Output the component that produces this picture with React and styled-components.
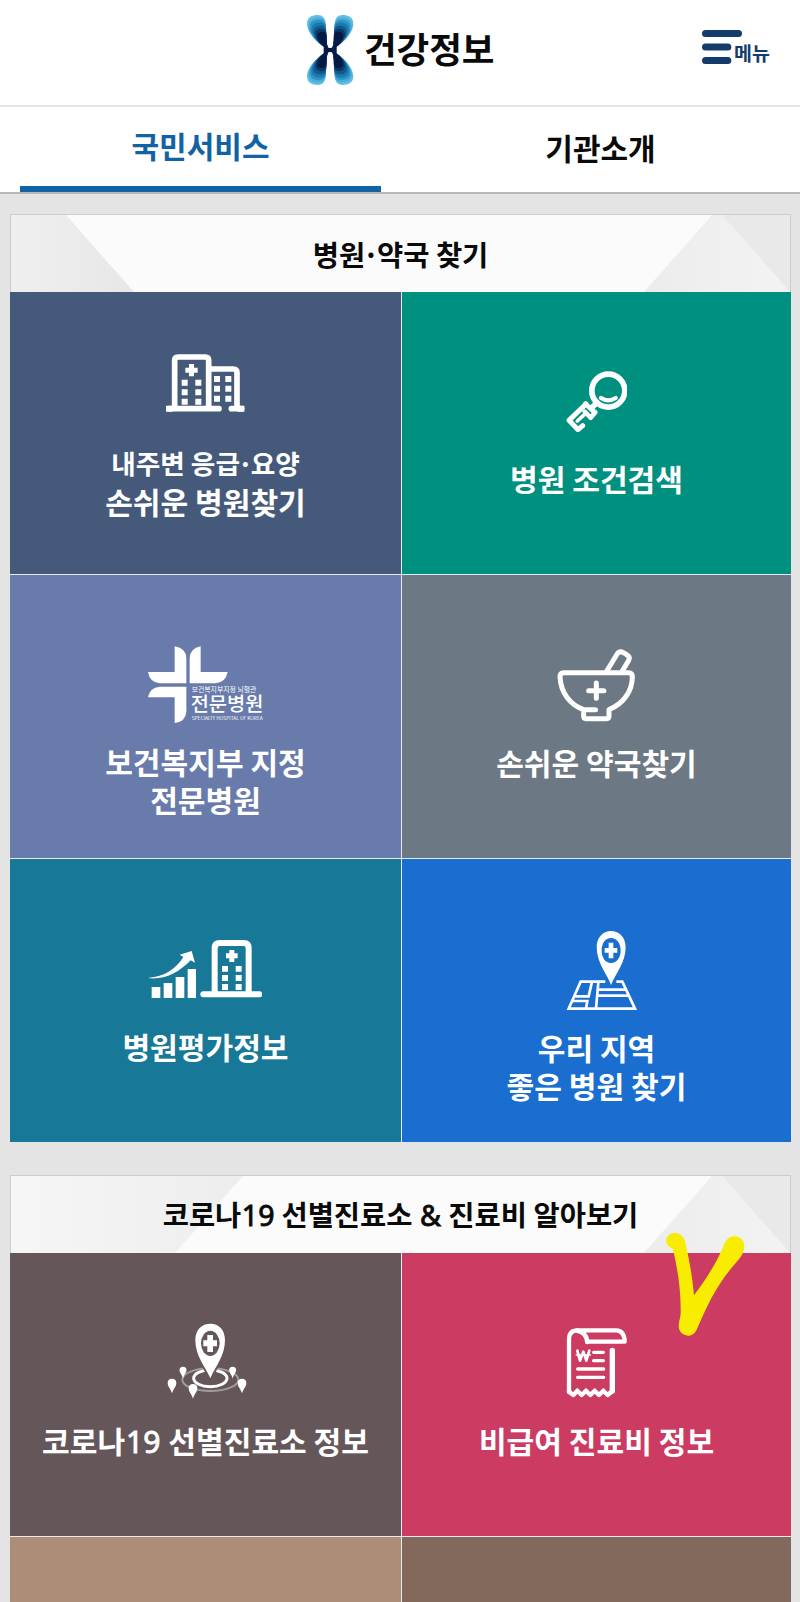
import React from 'react';
import styled, { createGlobalStyle } from 'styled-components';

const GlobalStyle = createGlobalStyle`
  * {
    box-sizing: border-box;
  }
  body {
    margin: 0;
    background: #e4e4e4;
    font-family: 'Noto Sans CJK KR', 'Noto Sans', sans-serif;
  }
`;

const Page = styled.div`
  width: 800px;
  height: 1602px;
  overflow: hidden;
  background: #e4e4e4;
`;

const Header = styled.header`
  display: grid;
  grid-template-columns: 1fr auto 1fr;
  align-items: center;
  height: 107px;
  padding: 0 30px;
  background: #fff;
  border-bottom: 2px solid #e1e8e8;
`;

const Logo = styled.a`
  grid-column: 2;
  display: flex;
  align-items: center;
  gap: 10px;
  padding: 0 0 6px 2px;
  color: #0a0a0a;
  font-size: 35.5px;
  font-weight: 700;
  line-height: 48px;

  span {
    margin-bottom: 4px;
  }
`;

const LogoMark = styled.svg`
  display: block;
  width: 46.4px;
  height: 70px;
`;

const MenuButton = styled.button`
  justify-self: end;
  display: flex;
  align-items: center;
  padding: 0 0 12px;
  border: 0;
  background: none;
  color: #143c6b;
  font: inherit;
  font-size: 19.5px;
  font-weight: 700;
  line-height: 24px;

  svg {
    display: block;
    width: 40px;
    height: 34px;
  }

  span {
    margin: 12px 0 0 -8px;
  }
`;

const Tabs = styled.nav`
  display: grid;
  grid-template-columns: 1fr 1fr;
  height: 87px;
  background: #fff;
  border-bottom: 2px solid #b4b8ba;
`;

const Tab = styled.a`
  display: flex;
  align-items: center;
  justify-content: center;
  margin: 0 19px 0 20px;
  padding-bottom: ${(props) => (props.$active ? 4 : 3)}px;
  border-bottom: ${(props) => (props.$active ? '6px solid #1263a3' : '2px solid transparent')};
  color: ${(props) => (props.$active ? '#1263a3' : '#0a0a0a')};
  font-size: 30px;
  font-weight: 700;
  line-height: 44px;
`;

const Section = styled.section`
  position: relative;
  width: 781px;
  margin: ${(props) => props.$top}px 0 0 10px;
`;

const SectionTitle = styled.h2`
  position: relative;
  display: flex;
  align-items: center;
  justify-content: center;
  height: 78px;
  margin: 0;
  background: #fbfbfb;
  border: 1px solid #cdcdcd;
  border-bottom: 0;
  color: #0a0a0a;
  font-size: 28.5px;
  font-weight: 700;
  line-height: 40px;
`;

const TitleText = styled.span`
  position: relative;
  white-space: nowrap;
`;

const TitleShapes = styled.svg`
  position: absolute;
  inset: 0;
  width: 100%;
  height: 100%;
`;

const Latin = styled.span`
  padding: 0 ${(props) => props.$pad || 0}px;
  font-family: 'Noto Sans', sans-serif;
  font-weight: 400;
  -webkit-text-stroke: 0.9px currentColor;
`;

const Dot = styled.span`
  margin: 0 -2.5px;
`;

const TileGrid = styled.div`
  display: grid;
  grid-template-columns: 391px 389px;
  grid-template-rows: ${(props) => props.$firstRow}px;
  grid-auto-rows: 283px;
  gap: 1px;
  background: #e6ebef;
`;

const Tile = styled.a`
  display: flex;
  flex-direction: column;
  align-items: center;
  padding-top: ${(props) => props.$top}px;
  background: ${(props) => props.$color};
  color: #fff;
`;

const TileIcon = styled.svg`
  display: block;
  flex: none;
  width: ${(props) => props.$w / 3}px;
  height: ${(props) => props.$h / 3}px;
  margin-bottom: ${(props) => props.$gap}px;
  font-family: 'Noto Sans CJK KR', sans-serif;
`;

const Label = styled.span`
  font-size: ${(props) => (props.$small ? 26.7 : 30.1)}px;
  font-weight: 700;
  line-height: 38px;
  white-space: nowrap;
`;

const Marker = styled.svg`
  position: absolute;
  left: 655.5px;
  top: 57.5px;
  width: 79px;
  height: 103px;
`;

const wing = 'M116 147 C96 140 50 104 50 70 C50 50 66 44 82 44 C98 44 106 54 106 74 C106 104 106 128 116 147 Z';
const wingLayers = [
  ['#62bfe3', 1],
  ['#4aaed8', 0.93],
  ['#2f93c6', 0.86],
  ['#1c79ad', 0.78],
  ['#125a8b', 0.69],
  ['#0b3a69', 0.6],
  ['#061a44', 0.51],
];

const Wing = ({ flip }) => (
  <g transform={flip}>
    {wingLayers.map(([fill, s]) => (
      <path
        key={fill}
        d={wing}
        fill={fill}
        transform={`translate(${112 - 112 * s} ${147 - 147 * s}) scale(${s})`}
      />
    ))}
  </g>
);

const BuildingsIcon = ({ gap }) => (
  <TileIcon $w={235} $h={174} $gap={gap} viewBox="228 43 235 174">
    <g fill="none" stroke="#fff" strokeWidth="17">
      <path d="M254 205 V62 Q254 52 264 52 H346 Q356 52 356 62 V205" />
      <path d="M358 88 H430 Q441 88 441 99 V205" />
      <path d="M236 207 H387" strokeLinecap="round" />
      <path d="M424 207 H455" strokeLinecap="round" />
    </g>
    <g fill="#fff">
      <path d="M228 198h20v18h-20zM443 198h20v18h-20z" />
      <path d="M297 73h15v11h11v15h-11v11h-15v-11h-11v-15h11z" />
      <path d="M275 120h18v18h-18zM316 120h18v18h-18zM275 149h18v18h-18zM316 149h18v18h-18zM275 177h18v18h-18zM316 177h18v18h-18z" />
      <path d="M372 109h18v18h-18zM406 109h18v18h-18zM372 138h18v18h-18zM406 138h18v18h-18zM372 168h18v18h-18zM406 168h18v18h-18z" />
    </g>
  </TileIcon>
);

const KeyIcon = ({ gap }) => (
  <TileIcon $w={185} $h={184} $gap={gap} viewBox="228 62 185 184">
    <g fill="none" stroke="#fff" strokeLinecap="round" strokeLinejoin="round">
      <circle cx="355" cy="121" r="49.5" strokeWidth="17" />
      <path d="M333 143 Q355 157 377 143" strokeWidth="13" />
      <path d="M320 157 L306 172" strokeWidth="17" />
      <path d="M316 186 L302 202 L284 184" strokeWidth="14" />
      <path d="M288 161 L237 210 L264 238 L278 226" strokeWidth="15" />
      <path d="M286 160 L312 184" strokeWidth="14" />
      <path d="M262 212 L286 190" strokeWidth="11" />
    </g>
  </TileIcon>
);

const SpecialtyIcon = ({ gap }) => (
  <TileIcon $w={345} $h={231} $gap={gap} viewBox="173 47 345 231">
    <g fill="#fff">
      <path d="M253 48 Q288 54 288 84 V159 H208 Q178 156 173 125 H253 Z" />
      <path d="M331 48 V125 H412 Q406 156 376 159 H298 V84 Q299 54 331 48 Z" />
      <path d="M288 169 V244 Q286 274 253 278 V201 H173 Q178 172 208 169 Z" />
      <text x="304" y="185" fontSize="19" textLength="194" lengthAdjust="spacingAndGlyphs">보건복지부지정 뇌혈관</text>
      <text x="301" y="243" fontSize="58" fontWeight="500" textLength="218" lengthAdjust="spacingAndGlyphs">전문병원</text>
      <text x="304" y="269" fontSize="13" textLength="213" lengthAdjust="spacingAndGlyphs">SPECIALTY HOSPITAL OF KOREA</text>
    </g>
  </TileIcon>
);

const MortarIcon = ({ gap }) => (
  <TileIcon $w={235} $h={218} $gap={gap} viewBox="232 58 235 218">
    <g fill="none" stroke="#fff" strokeWidth="15" strokeLinecap="round" strokeLinejoin="round">
      <path d="M348 240 H312 V260 Q312 267 319 267 H380 Q388 267 388 260 V240 C432 222 458 184 458 141 Q458 129 447 129 H252 Q241 129 241 141 C243 190 272 226 312 240" />
      <path d="M381 125 L411 75 Q419 62 431 69 L441 75 Q453 82 446 94 L428 124" />
      <path d="M350 160 V206 M327 183 H373" />
    </g>
  </TileIcon>
);

const ChartIcon = ({ gap }) => (
  <TileIcon $w={340} $h={174} $gap={gap} viewBox="146 60 340 174">
    <g fill="#fff">
      <path d="M154 201h26v33h-26zM190 189h26v45h-26zM226 171h26v63h-26zM262 147h25v87h-25z" />
      <path d="M146 173 C190 171 228 146 249 111 L238 104 L274 93 L284 128 L271 121 C236 158 194 179 146 175 Z" />
      <path d="M387 90h15v10h10v15h-10v11h-15v-11h-10v-15h10z" />
      <path d="M365 138h18v17h-18zM406 138h18v17h-18zM365 165h18v18h-18zM406 165h18v18h-18zM365 192h18v18h-18zM406 192h18v18h-18z" />
    </g>
    <g fill="none" stroke="#fff" strokeWidth="18">
      <path d="M343 218 V85 Q343 69 358 69 H430 Q445 69 445 85 V218" />
      <path d="M309 223 H477" strokeLinecap="round" />
    </g>
  </TileIcon>
);

const MapIcon = ({ gap }) => (
  <TileIcon $w={243} $h={238} $gap={gap} viewBox="198 32 243 238">
    <path
      fillRule="evenodd"
      fill="#fff"
      d="M363 194 C352 162 320 128 320 80 C320 52 339 32 363 32 C388 32 407 52 407 80 C407 128 375 162 363 194 Z M363 53 C346 53 335 69 335 90 C335 113 346 128 363 128 C380 128 392 113 392 90 C392 69 380 53 363 53 Z"
    />
    <path fill="#fff" d="M356 67h14v16h12v14h-12v17h-14v-17h-12v-14h12z" />
    <g fill="none" stroke="#fff" strokeWidth="8">
      <path d="M346 184 H272 L236 265 H435 L397 184 H379" />
      <path d="M306 184 L296 228 H252 M325 186 L318 265 M320 208 H408 M318 226 H417 M246 242 H292 L288 265" />
    </g>
  </TileIcon>
);

const smallPin = 'M0 44 C-4 30 -13 24 -13 12 C-13 4 -7 0 0 0 C7 0 13 4 13 12 C13 24 4 30 0 44 Z';

const ScreeningIcon = ({ gap }) => (
  <TileIcon $w={247} $h={228} $gap={gap} viewBox="493 490 247 228">
    <ellipse cx="632" cy="660" rx="84" ry="34" fill="none" stroke="#a39a9b" strokeWidth="6" />
    <ellipse cx="632" cy="656" rx="50" ry="25" fill="#655759" stroke="#fff" strokeWidth="9" />
    <path
      fill="#fff"
      stroke="#655759"
      strokeWidth="12"
      paintOrder="stroke"
      d="M632 656 C618 622 587 590 587 541 C587 510 607 492 632 492 C657 492 676 510 676 541 C676 590 646 622 632 656 Z"
    />
    <ellipse cx="632" cy="551" rx="28" ry="38" fill="#655759" />
    <path fill="#fff" d="M623 526h17v16h12v18h-12v17h-17v-17h-12v-18h12z" />
    <g fill="#fff">
      <path d={smallPin} transform="translate(517 657)" />
      <path d={smallPin} transform="translate(580 673)" />
      <path d={smallPin} transform="translate(727 657)" />
      <path d={smallPin} transform="translate(550 621) scale(.8)" />
      <path d={smallPin} transform="translate(699 621) scale(.8)" />
    </g>
  </TileIcon>
);

const ReceiptIcon = ({ gap }) => (
  <TileIcon $w={183} $h={210} $gap={gap} viewBox="499 503 183 210">
    <g fill="none" stroke="#fff" strokeLinecap="round" strokeLinejoin="round">
      <path d="M508 695 V538 Q508 510 533 510 H650 Q674 511 675 544 H563" strokeWidth="13" />
      <path d="M533 511 Q559 514 563 545" strokeWidth="14" />
      <path d="M638 570 V692" strokeWidth="16" />
      <path d="M508 694 L521 704 L533 691 L546 704 L559 691 L572 704 L585 691 L598 704 L611 691 L624 704 L638 692" strokeWidth="13" />
      <path d="M582 576 H611 M582 601 H611 M534 626 H612 M534 651 H612" strokeWidth="10" />
      <path d="M533 571 L541 601 L551 574 L560 601 L569 571" strokeWidth="8" />
      <path d="M530 584 H572" strokeWidth="5" />
    </g>
  </TileIcon>
);

const hospitalTiles = [
  {
    color: '#455a7b',
    top: 62.3,
    gap: 31.5,
    icon: BuildingsIcon,
    lines: [<>내주변 응급<Dot>·</Dot>요양</>, '손쉬운 병원찾기'],
    smallFirst: true,
  },
  { color: '#00907f', top: 78.7, gap: 27, icon: KeyIcon, lines: ['병원 조건검색'] },
  { color: '#687bab', top: 70.7, gap: 19.3, icon: SpecialtyIcon, lines: ['보건복지부 지정', '전문병원'] },
  { color: '#6c7883', top: 74.3, gap: 21, icon: MortarIcon, lines: ['손쉬운 약국찾기'] },
  { color: '#177898', top: 81, gap: 29, icon: ChartIcon, lines: ['병원평가정보'] },
  { color: '#196ed0', top: 71.7, gap: 17.5, icon: MapIcon, lines: ['우리 지역', '좋은 병원 찾기'] },
];

const costTiles = [
  {
    color: '#655759',
    top: 70.3,
    gap: 21.7,
    icon: ScreeningIcon,
    lines: [<>코로나<Latin $pad={1}>19</Latin> 선별진료소 정보</>],
  },
  { color: '#cb3b62', top: 74.7, gap: 23.3, icon: ReceiptIcon, lines: ['비급여 진료비 정보'] },
  { color: '#ad8c78', top: 70, lines: [] },
  { color: '#82695b', top: 70, lines: [] },
];

const TileList = ({ tiles, firstRow }) => (
  <TileGrid $firstRow={firstRow}>
    {tiles.map(({ color, top, gap, icon: Icon, lines, smallFirst }) => (
      <Tile key={color} $color={color} $top={top}>
        {Icon && <Icon gap={gap} />}
        {lines.map((line, i) => (
          <Label key={i} $small={smallFirst && i === 0}>{line}</Label>
        ))}
      </Tile>
    ))}
  </TileGrid>
);

const Title = ({ left, id, colors, children }) => (
  <SectionTitle>
    <TitleShapes viewBox="0 0 779 77" preserveAspectRatio="none">
      <defs>
        <linearGradient id={id}>
          <stop offset="0" stopColor={colors[0]} />
          <stop offset="1" stopColor={colors[1]} />
        </linearGradient>
        <linearGradient id={`${id}-peak`}>
          <stop offset="0" stopColor="#ececec" />
          <stop offset="1" stopColor="#f3f3f3" />
        </linearGradient>
      </defs>
      <path d={left} fill={`url(#${id})`} />
      <path d="M633 77 L701 0 H711 L779 77 Z" fill={`url(#${id}-peak)`} />
      <path d="M711 0 H779 V77 Z" fill="#e9e9e9" />
    </TitleShapes>
    <TitleText>{children}</TitleText>
  </SectionTitle>
);

const App = () => (
  <Page>
    <GlobalStyle />
    <Header>
      <Logo>
        <LogoMark viewBox="50 44 139 210">
          <Wing />
          <Wing flip="translate(239 0) scale(-1 1)" />
          <Wing flip="translate(0 298) scale(1 -1)" />
          <Wing flip="translate(239 298) scale(-1 -1)" />
          <path d="M100 138 Q119 148 139 138 V160 Q119 150 100 160 Z" fill="#061a44" />
        </LogoMark>
        <span>건강정보</span>
      </Logo>
      <MenuButton>
        <svg viewBox="0 0 120 102">
          <g stroke="#143c6b" strokeWidth="21" strokeLinecap="round">
            <path d="M10.5 10.5 H109.5 M10.5 51 H77.5 M10.5 91.5 H77.5" />
          </g>
        </svg>
        <span>메뉴</span>
      </MenuButton>
    </Header>
    <Tabs>
      <Tab $active>국민서비스</Tab>
      <Tab>기관소개</Tab>
    </Tabs>

    <Section $top={20}>
      <Title id="hospital" left="M0 0 H55 L123 77 H0 Z" colors={['#efefef', '#e7e7e7']}>
        병원<Dot>·</Dot>약국 찾기
      </Title>
      <TileList tiles={hospitalTiles} firstRow={282} />
    </Section>

    <Section $top={33}>
      <Title id="cost" left="M0 0 H232 L164 77 H0 Z" colors={['#f6f6f6', '#ededed']}>
        코로나<Latin $pad={0.5}>19</Latin> 선별진료소 <Latin $pad={1}>&amp;</Latin> 진료비 알아보기
      </Title>
      <TileList tiles={costTiles} firstRow={283} />
      {/* hand-drawn check mark */}
      <Marker viewBox="797 218 237 309">
        <path
          fill="#f8ec00"
          d="M798 243 C798 225 811 218 824 218 C838 219 850 228 854 243 C864 285 876 345 881 405 C909 367 941 322 967 263 C975 239 986 228 1003 228 C1020 228 1032 241 1032 258 C1031 281 1017 296 1003 312 C978 340 957 371 935 410 C916 446 901 481 889 508 C882 522 872 526 863 526 C847 525 835 513 835 497 C835 482 841 472 841 457 C842 389 832 328 818 266 C806 261 798 254 798 243 Z"
        />
      </Marker>
    </Section>
  </Page>
);

export default App;
